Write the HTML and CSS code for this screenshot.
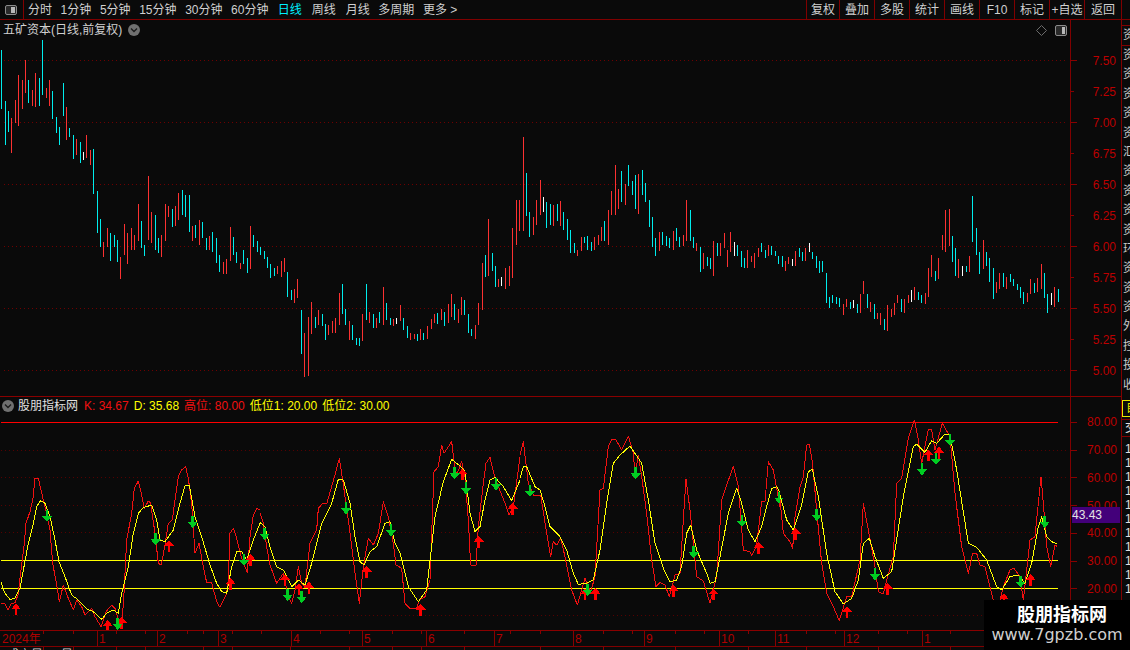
FILE: index.html
```html
<!DOCTYPE html>
<html lang="zh">
<head>
<meta charset="utf-8">
<title>五矿资本</title>
<link rel="stylesheet" href="styles.css">
</head>
<body>
<div class="app">
  <header class="topbar">
    <div class="corner">
      <svg class="pane-icon" viewBox="0 0 12 10"><rect class="pi-box" x="0.5" y="0.5" width="11" height="9" rx="1.5"/><rect class="pi-fill" x="6" y="2" width="4" height="6"/></svg>
    </div>
    <nav class="periods">
      <span>分时</span><span>1分钟</span><span>5分钟</span><span>15分钟</span><span>30分钟</span><span>60分钟</span><span class="active wide">日线</span><span class="wide">周线</span><span>月线</span><span>多周期</span><span>更多 &gt;</span>
    </nav>
    <div class="tools">
      <span class="tool tool-first">复权</span><span class="tool">叠加</span><span class="tool">多股</span><span class="tool">统计</span><span class="tool">画线</span><span class="tool">F10</span><span class="tool">标记</span><span class="tool">+自选</span><span class="tool tool-last">返回</span>
    </div>
  </header>

  <div class="workspace">
    <div class="charts">
      <section class="section price">
        <div class="pane">
          <div class="title-row">
            <span>五矿资本(日线,前复权)</span>
            <svg class="chev" viewBox="0 0 12 12"><circle class="chev-bg" cx="6" cy="6" r="6"/><path class="chev-mark" d="M3 4.5L6 7.5L9 4.5"/></svg>
            <svg class="diamond" viewBox="0 0 11 11"><path class="diamond-mark" d="M5.5 0.5L10.5 5.5L5.5 10.5L0.5 5.5Z"/></svg>
            <svg class="pane-icon pane-icon-lg" viewBox="0 0 12 11"><rect class="pi-box" x="0.5" y="0.5" width="11" height="10" rx="1.5"/><rect class="pi-fill" x="7" y="2" width="3" height="7"/></svg>
          </div>
          <svg class="plot plot-price" viewBox="0 0 3210 1068">
            <path class="grid" d="M12 61.5H3198M12 247.5H3198M12 433.5H3198M12 619.5H3198M12 805.5H3198M12 991.5H3198"/>
            <g transform="scale(1.0233 1)">
              <path class="bar up" d="M33 234V339M45 180V249M54 105V258M65 120V207M74 60V159M95 150V198M104 99V201M136 144V174M145 120V198M194 201V300M224 297V345M253 285V354M265 330V375M303 606V651M315 564V621M353 651V717M364 552V645M373 579V672M385 564V630M394 585V630M405 492V603M435 408V600M444 516V609M473 585V651M485 492V603M493 498V531M514 498V558M523 459V540M564 558V603M584 540V615M614 588V630M655 666V702M663 657V702M675 561V663M704 669V687M734 558V687M813 678V702M824 663V711M833 654V696M863 747V789M873 717V774M892 879V1011M904 831V1008M912 786V882M933 810V855M963 855V885M974 843V879M983 834V879M995 759V855M1024 843V900M1062 822V903M1082 816V849M1103 834V864M1123 741V855M1153 837V858M1173 795V843M1203 879V900M1214 882V897M1232 867V900M1252 858V897M1264 837V867M1273 822V849M1293 807V840M1314 792V849M1323 762V831M1343 807V849M1352 771V825M1393 855V897M1402 789V855M1414 669V810M1431 537V708M1462 717V741M1483 684V747M1493 678V738M1502 564V714M1513 480V615M1522 480V573M1534 291V573M1563 531V585"/>
              <path class="bar down" d="M4 30V207M16 183V315M24 213V276M83 120V189M115 114V198M124 0V165M153 153V237M165 231V279M174 261V315M185 129V228M203 264V291M215 285V357M235 306V369M274 327V462M285 453V579M294 537V621M323 579V663M335 585V621M344 600V666M414 543V624M423 615V648M455 525V630M464 594V639M505 507V561M534 450V525M544 465V531M555 465V576M573 555V594M593 546V594M605 594V630M622 576V636M634 594V669M643 645V696M684 591V645M693 636V669M713 630V672M725 654V699M743 585V621M754 603V636M763 621V645M775 633V657M784 651V684M793 672V714M804 684V708M842 696V771M854 750V780M883 810V942M924 831V864M945 822V858M954 852V900M1003 732V822M1012 807V855M1033 855V900M1044 894V915M1053 894V918M1074 732V840M1094 822V864M1112 816V849M1132 789V840M1144 834V855M1182 834V870M1194 858V894M1223 882V903M1243 879V900M1282 819V852M1302 816V858M1332 792V840M1363 780V825M1373 822V879M1382 867V888M1422 645V711M1443 639V693M1452 678V741M1543 399V528M1551 516V591"/>
              <path class="bar flat" d="M244 336V360M1162 834V852M1471 711V738"/>
            </g>
            <g transform="translate(1605 270) scale(1.0233 1)">
              <path class="bar up" d="M4 210V285M16 150V255M54 225V288M74 213V288M124 360V378M136 321V363M174 321V360M185 315V345M194 291V333M215 240V345M224 183V255M235 105V255M244 177V237M265 162V225M303 132V252M364 306V363M405 303V360M435 315V348M444 210V333M473 339V363M493 369V417M523 333V438M544 339V378M555 309V354M564 360V411M573 306V366M622 360V414M634 378V396M643 369V414M655 354V381M684 345V378M734 393V423M743 381V402M763 363V408M793 354V393M904 522V555M912 507V531M954 492V549M963 453V492M983 516V546M1003 549V567M1012 549V585M1033 525V603M1044 537V561M1053 519V555M1062 495V519M1082 507V549M1094 495V519M1112 471V510M1144 489V522M1153 414V501M1162 375V441M1182 384V447M1194 315V360M1203 240V366M1214 237V348M1243 387V444M1273 378V426M1314 330V417M1352 456V489M1363 429V477M1382 441V477M1443 489V516M1452 447V492M1472 444V486M1484 402V477M1522 471V531"/>
              <path class="bar down" d="M33 216V294M45 222V285M65 222V273M83 246V300M95 267V330M104 300V369M115 339V369M145 321V339M153 318V360M165 336V363M203 273V333M253 123V216M274 105V168M285 153V195M294 135V237M315 120V195M323 159V216M335 210V291M344 261V351M353 324V378M373 306V345M385 318V348M394 324V354M414 294V333M423 321V351M455 240V333M464 321V354M485 351V426M505 381V408M514 384V417M534 339V378M593 345V378M605 363V411M614 384V414M663 339V366M675 360V384M693 348V375M704 363V378M713 378V402M725 378V411M775 354V381M784 366V393M813 366V387M824 378V414M833 393V429M842 393V426M854 429V519M863 501V534M873 495V519M883 501V522M892 504V531M924 516V537M945 522V549M974 492V534M995 522V567M1024 567V600M1074 507V546M1123 486V510M1132 495V519M1173 423V453M1223 318V396M1232 354V438M1264 408V426M1282 198V336M1293 294V375M1302 366V432M1323 366V408M1332 384V456M1343 414V507M1373 429V471M1393 432V456M1402 447V468M1414 462V480M1423 471V504M1431 486V522M1463 459V489M1493 429V504M1502 492V549M1534 477V516"/>
              <path class="bar flat" d="M24 201V246M584 336V378M754 387V408M804 339V366M933 510V534M1103 480V516M1252 408V438M1513 489V525"/>
            </g>
          </svg>
        </div>
        <div class="axis axis-price">
          <div class="mark"><i class="tick"></i><span>7.50</span></div>
          <div class="mark"><i class="tick minor"></i><span>7.25</span></div>
          <div class="mark"><i class="tick"></i><span>7.00</span></div>
          <div class="mark"><i class="tick minor"></i><span>6.75</span></div>
          <div class="mark"><i class="tick"></i><span>6.50</span></div>
          <div class="mark"><i class="tick minor"></i><span>6.25</span></div>
          <div class="mark"><i class="tick"></i><span>6.00</span></div>
          <div class="mark"><i class="tick minor"></i><span>5.75</span></div>
          <div class="mark"><i class="tick"></i><span>5.50</span></div>
          <div class="mark"><i class="tick minor"></i><span>5.25</span></div>
          <div class="mark"><i class="tick"></i><span>5.00</span></div>
        </div>
      </section>

      <section class="section indicator">
        <div class="pane">
          <div class="legend">
            <svg class="chev" viewBox="0 0 12 12"><circle class="chev-bg" cx="6" cy="6" r="6"/><path class="chev-mark" d="M3 4.5L6 7.5L9 4.5"/></svg>
            <span class="legend-name">股朋指标网</span>
            <span class="c-red">K: 34.67</span>
            <span class="c-yellow">D: 35.68</span>
            <span class="c-red">高位: 80.00</span>
            <span class="c-yellow">低位1: 20.00</span>
            <span class="c-yellow">低位2: 30.00</span>
          </div>
          <svg class="plot plot-ind" viewBox="0 0 3210 630">
            <defs>
              <path id="arrow-up" class="arrow-up" d="M0 0L15 18H4V36H-4V18H-15Z"/>
              <path id="arrow-down" class="arrow-down" d="M0 0L15-18H4V-36H-4V-18H-15Z"/>
            </defs>
            <path class="grid grid-dim" d="M3 92H3207M3 172H3207M3 256H3207M3 337H3207M3 587H3207"/>
            <path class="level-red" d="M3 7.5H3174"/>
            <path class="level-yellow" d="M3 421.5H3174M3 505.5H3174"/>

            <g>
              <polyline class="line-k" points="3,550 15,551 24,570 33,552 45,548 54,525 63,450 72,380 78,310 90,275 99,235 105,175 115,175 124,215 135,260 150,330 158,430 172,505 178,545 190,495 205,535 220,570 230,540 245,560 255,585 265,575 275,565 285,590 303,620 318,575 335,555 345,565 355,600 365,625 372,520 380,360 395,280 403,205 415,183 425,225 433,265 445,243 452,250 465,340 475,430 484,435 495,375 505,310 517,300 525,240 535,170 545,150 557,140 565,175 575,250 585,400 597,370 608,430 620,488 635,488 650,545 660,562 680,520 685,480 690,340 700,325 710,355 725,415 742,458 750,350 760,285 770,265 780,270"/>
              <polyline class="line-d" points="3,487 15,520 30,538 45,535 60,505 72,440 85,370 100,310 110,260 122,242 135,250 150,290 165,360 177,425 195,470 215,525 235,540 260,567 280,575 305,598 320,580 340,570 355,580 365,520 385,440 400,340 415,280 430,263 455,255 470,300 480,360 495,365 520,330 540,250 555,197 568,197 585,290 605,350 630,435 650,490 665,515 680,520 695,440 710,395 725,395 740,420 760,360 780,310"/>
              <use href="#arrow-up" transform="translate(48 550)"/><use href="#arrow-up" transform="translate(323 600)"/><use href="#arrow-up" transform="translate(365 590)"/><use href="#arrow-up" transform="translate(507 360)"/><use href="#arrow-up" transform="translate(692 474)"/><use href="#arrow-up" transform="translate(752 402)"/>
              <use href="#arrow-down" transform="translate(141 306)"/><use href="#arrow-down" transform="translate(467 376)"/><use href="#arrow-down" transform="translate(353 630)"/><use href="#arrow-down" transform="translate(578 324)"/><use href="#arrow-down" transform="translate(732 438)"/>
            </g>
            <g transform="translate(780 0)">
              <polyline class="line-k" points="0,278 10,310 20,380 30,435 50,490 70,460 85,530 95,550 105,510 115,440 125,490 135,500 150,370 170,330 175,265 188,250 200,252 225,165 238,115 248,180 265,300 285,460 298,550 310,440 325,355 340,375 355,340 370,245 385,290 400,370 408,435 425,445 435,550 450,565 470,565 478,540 495,530 510,480 522,155 535,140 545,75 552,100 575,65 583,130 590,165 605,125 615,170 625,300 632,435 648,435 655,320 670,190 678,130 690,112 700,155 715,200 735,250 747,285 760,260 780,110"/>
              <polyline class="line-d" points="0,308 15,320 30,380 50,440 70,450 95,500 115,480 135,495 155,430 185,310 215,250 235,178 250,180 270,250 285,350 300,425 312,435 330,395 350,380 375,310 390,305 405,370 420,400 445,500 475,545 500,510 525,290 550,185 575,118 600,138 615,155 630,280 645,335 660,320 675,240 690,180 705,172 730,200 755,242 780,180"/>
              <use href="#arrow-up" transform="translate(75 462)"/><use href="#arrow-up" transform="translate(117 490)"/><use href="#arrow-up" transform="translate(147 485)"/><use href="#arrow-up" transform="translate(320 437)"/><use href="#arrow-up" transform="translate(482 551)"/><use href="#arrow-up" transform="translate(607 145)"/><use href="#arrow-up" transform="translate(656 347)"/><use href="#arrow-up" transform="translate(758 248)"/>
              <use href="#arrow-down" transform="translate(14 360)"/><use href="#arrow-down" transform="translate(83 543)"/><use href="#arrow-down" transform="translate(125 549)"/><use href="#arrow-down" transform="translate(258 283)"/><use href="#arrow-down" transform="translate(393 349)"/><use href="#arrow-down" transform="translate(584 178)"/><use href="#arrow-down" transform="translate(618 223)"/><use href="#arrow-down" transform="translate(708 211)"/>
            </g>
            <g transform="translate(1560 0)">
              <polyline class="line-k" points="0,105 10,65 25,190 40,225 62,225 80,340 92,410 100,365 110,375 122,355 135,410 155,510 172,555 195,475 212,515 225,470 240,210 250,205 265,80 275,58 287,58 305,90 325,48 340,100 345,165 355,105 365,170 380,280 395,420 408,500 420,487 435,495 448,530 465,465 480,460 490,300 498,178 510,270 530,470 550,483 570,550 590,470 605,240 620,195 640,140 655,200 670,390 690,395 695,408 710,375 725,245 735,245 745,125 760,150 780,260"/>
              <polyline class="line-d" points="0,175 10,140 20,140 45,200 60,210 75,260 90,320 120,350 140,390 160,460 175,493 200,490 220,480 240,390 260,250 280,130 300,105 330,78 345,100 365,130 385,240 405,370 430,445 450,485 470,480 485,440 500,340 512,315 530,390 560,460 570,490 585,485 600,410 625,280 650,205 665,250 685,330 705,365 725,320 740,260 755,205 770,200 780,220"/>
              <use href="#arrow-up" transform="translate(195 505)"/><use href="#arrow-up" transform="translate(226 503)"/><use href="#arrow-up" transform="translate(461 495)"/><use href="#arrow-up" transform="translate(580 505)"/><use href="#arrow-up" transform="translate(716 365)"/>
              <use href="#arrow-down" transform="translate(30 231)"/><use href="#arrow-down" transform="translate(203 528)"/><use href="#arrow-down" transform="translate(347 178)"/><use href="#arrow-down" transform="translate(521 415)"/><use href="#arrow-down" transform="translate(666 321)"/><use href="#arrow-down" transform="translate(777 251)"/>
            </g>
            <g transform="translate(2340 0)">
              <polyline class="line-k" points="0,240 10,340 30,365 38,385 45,290 60,200 70,170 80,75 88,73 97,125 110,270 125,430 140,520 160,560 178,602 200,530 215,530 240,420 250,250 265,330 285,440 295,515 310,522 320,480 340,410 350,190 365,175 385,55 403,0 415,60 425,130 445,28 455,30 465,90 487,10 510,50 525,220 545,380 565,460 578,400 590,400 600,435 615,440 635,520 640,540 660,540 672,495 690,450 702,445 720,470 730,540 750,360 765,350 783,170 790,250 800,380 812,440 825,375 832,380"/>
              <polyline class="line-d" points="0,225 20,300 40,330 65,255 85,155 97,148 115,230 140,400 165,515 190,552 215,535 235,480 250,370 268,355 285,410 310,475 335,455 370,230 400,80 410,72 435,97 455,62 470,70 495,42 510,45 530,150 565,370 590,382 620,420 650,500 665,510 690,470 715,465 735,490 755,430 775,320 785,290 800,350 815,365 832,372"/>
              <use href="#arrow-up" transform="translate(47 323)"/><use href="#arrow-up" transform="translate(201 558)"/><use href="#arrow-up" transform="translate(323 488)"/><use href="#arrow-up" transform="translate(445 88)"/><use href="#arrow-up" transform="translate(477 80)"/><use href="#arrow-up" transform="translate(672 520)"/><use href="#arrow-up" transform="translate(752 462)"/>
              <use href="#arrow-down" transform="translate(110 303)"/><use href="#arrow-down" transform="translate(285 481)"/><use href="#arrow-down" transform="translate(426 166)"/><use href="#arrow-down" transform="translate(468 135)"/><use href="#arrow-down" transform="translate(510 78)"/><use href="#arrow-down" transform="translate(722 503)"/><use href="#arrow-down" transform="translate(794 324)"/>
            </g>
          </svg>
        </div>
        <div class="axis axis-ind">
          <div class="mark"><i class="tick"></i><span>80.00</span></div>
          <div class="mark"><i class="tick"></i><span>70.00</span></div>
          <div class="mark"><i class="tick"></i><span>60.00</span></div>
          <div class="mark"><i class="tick"></i><span>50.00</span></div>
          <div class="mark"><i class="tick"></i><span>40.00</span></div>
          <div class="mark"><i class="tick"></i><span>30.00</span></div>
          <div class="mark"><i class="tick"></i><span>20.00</span></div>
          <div class="last-value">43.43</div>
        </div>
      </section>

      <svg class="timeline" viewBox="0 0 1121 15">
        <path class="time-minor" d="M43 0V3M73 0V3M116 0V3M145 0V3M187 0V3M203 0V3M232 0V3M261 0V3M320 0V3M349 0V3M392 0V3M421 0V3M464 0V3M510 0V3M540 0V3M603 0V3M632 0V3M675 0V3M704 0V3M748 0V3M806 0V3M835 0V3M878 0V3M907 0V3M950 0V3M1010 0V3M1040 0V3"/>
        <path class="time-major" d="M97 0V15M157 0V15M218 0V15M291 0V15M362 0V15M426 0V15M494 0V15M573 0V15M644 0V15M719 0V15M775 0V15M844 0V15M922 0V15M1070.5 0V15"/>
        <text class="time-label" x="2" y="12">2024年</text>
        <text class="time-label" x="99" y="12">1</text>
        <text class="time-label" x="159" y="12">2</text>
        <text class="time-label" x="220" y="12">3</text>
        <text class="time-label" x="293" y="12">4</text>
        <text class="time-label" x="364" y="12">5</text>
        <text class="time-label" x="428" y="12">6</text>
        <text class="time-label" x="496" y="12">7</text>
        <text class="time-label" x="575" y="12">8</text>
        <text class="time-label" x="646" y="12">9</text>
        <text class="time-label" x="721" y="12">10</text>
        <text class="time-label" x="777" y="12">11</text>
        <text class="time-label" x="846" y="12">12</text>
        <text class="time-label" x="924" y="12">1</text>
      </svg>
      <div class="statusline">
        <span>成交量</span><span>量</span>
        <svg class="status-ticks" viewBox="0 0 1121 3"><path class="time-major" d="M43.5 0V3M73.5 0V3M116.5 0V3M145.5 0V3M203.5 0V3M232.5 0V3M290.5 0V3M349.5 0V3M392.5 0V3M421.5 0V3M464.5 0V3M540.5 0V3M603.5 0V3M675.5 0V3M748.5 0V3M806.5 0V3M878.5 0V3M950.5 0V3"/></svg>
      </div>
    </div>

    <aside class="side">
      <div class="side-top">
        <div class="side-row side-boxed">资</div>
        <div class="side-row">资</div>
        <div class="side-row">资</div>
        <div class="side-row">资</div>
        <div class="side-row">资</div>
        <div class="side-row">资</div>
        <div class="side-row">汇</div>
        <div class="side-row">资</div>
        <div class="side-row">资</div>
        <div class="side-row">资</div>
        <div class="side-row">资</div>
        <div class="side-row">环</div>
        <div class="side-row">资</div>
        <div class="side-row">资</div>
        <div class="side-row">资</div>
        <div class="side-row">外</div>
        <div class="side-row">控</div>
        <div class="side-row">投</div>
        <div class="side-row">收</div>
      </div>
      <div class="side-bottom">
        <div class="side-self">自</div>
        <div class="side-head">交</div>
        <div class="side-num">1</div><div class="side-num">1</div><div class="side-num">1</div><div class="side-num">1</div><div class="side-num">1</div><div class="side-num">1</div><div class="side-num">1</div><div class="side-num">1</div><div class="side-num">1</div><div class="side-num">1</div><div class="side-num">1</div>
      </div>
    </aside>
  </div>

  <div class="watermark">
    <div class="wm-title">股朋指标网</div>
    <div class="wm-url">www.7gpzb.com</div>
  </div>
</div>
</body>
</html>
```

FILE: styles.css
```css
* { box-sizing: border-box; }
html, body { margin: 0; height: 100%; background: #0a0a0a; }
body {
  font-family: "Liberation Sans", "Noto Sans CJK SC", sans-serif;
  font-size: 12px;
  line-height: 14px;
  color: #d0d0d0;
  overflow: hidden;
}
.app { position: relative; width: 1130px; height: 650px; overflow: hidden; }

/* top bar */
.topbar {
  display: flex;
  align-items: stretch;
  height: 20px;
  border-bottom: 1px solid #800000;
}
.corner {
  width: 24px;
  border-right: 1px solid #800000;
  display: flex;
  align-items: center;
  padding-left: 5px;
}
.pane-icon { width: 12px; height: 10px; display: block; }
.pi-box { fill: #2a2a2a; stroke: #8c8c8c; stroke-width: 1; }
.pi-fill { fill: #b8b8b8; }
.periods {
  display: flex;
  align-items: center;
  gap: 8.6px;
  padding-left: 4px;
  white-space: nowrap;
}
.periods .active { color: #00f0ff; margin-left: 0.7px; }
.periods .wide { margin-right: 1.4px; }
.tools { display: flex; margin-left: auto; margin-right: 8px; }
.tool {
  width: 35px;
  border-left: 1px solid #800000;
  display: flex;
  align-items: center;
  justify-content: center;
  white-space: nowrap;
}
.tool-first { width: 33px; }
.tool-last { width: 38px; border-right: 1px solid #800000; }

/* body */
.workspace { display: flex; height: 630px; }
.charts { width: 1122px; border-right: 1px solid #800000; }
.section { display: flex; border-bottom: 1px solid #8a0000; }
.price { height: 377px; }
.indicator { height: 234px; }
.pane { width: 1070px; }
.title-row {
  display: flex;
  align-items: center;
  height: 20px;
  padding-left: 3px;
  white-space: nowrap;
}
.chev { width: 12px; height: 12px; flex: none; display: block; }
.chev-bg { fill: #707070; }
.chev-mark { fill: none; stroke: #1c1c1c; stroke-width: 1.4; }
.title-row .chev { margin-left: 6px; }
.diamond { width: 11px; height: 11px; margin-left: auto; }
.diamond-mark { fill: none; stroke: #6c6c6c; stroke-width: 1; }
.pane-icon-lg { height: 11px; margin: 0 3px 0 8px; }

.plot { display: block; width: 1070px; }
.plot-price { height: 356px; }
.plot-ind { height: 210px; }
.grid { fill: none; stroke: #6e0000; stroke-width: 3; stroke-dasharray: 2.5 9.5; shape-rendering: crispEdges; }
.grid-dim { stroke: #560000; }
.bar { fill: none; stroke-width: 2.93; shape-rendering: crispEdges; }
.bar.up { stroke: #ff3232; }
.bar.down { stroke: #00f0f0; }
.bar.flat { stroke: #ffffff; }
.level-red { fill: none; stroke: #ff0000; stroke-width: 3; shape-rendering: crispEdges; }
.level-yellow { fill: none; stroke: #ffff00; stroke-width: 3; shape-rendering: crispEdges; }
.line-k { fill: none; stroke: #f01010; stroke-width: 3; stroke-linejoin: round; shape-rendering: crispEdges; }
.line-d { fill: none; stroke: #ffff00; stroke-width: 3; stroke-linejoin: round; shape-rendering: crispEdges; }
.arrow-up { fill: #ff0000; shape-rendering: crispEdges; }
.arrow-down { fill: #00cc22; shape-rendering: crispEdges; }

/* axes */
.axis {
  position: relative;
  width: 51px;
  border-left: 1px solid #800000;
  color: #bb0000;
}
.mark { display: flex; align-items: center; justify-content: space-between; padding-right: 5px; }
.axis-price { padding-top: 25px; }
.axis-price .mark { height: 31px; }
.axis-ind { padding-top: 11.6px; }
.axis-ind .mark { height: 27.72px; padding-right: 4px; }
.tick { display: block; width: 6px; height: 1px; background: #8a0000; }
.tick.minor { width: 3px; }
.last-value {
  position: absolute;
  top: 110px;
  left: 1px;
  width: 48px;
  height: 16px;
  background: #43007a;
  color: #e4e4e4;
  line-height: 16px;
}

/* legend */
.legend {
  display: flex;
  align-items: center;
  height: 23px;
  padding: 0 0 6px 2px;
  white-space: nowrap;
}
.legend-name { margin: 0 6px 0 4px; color: #e0e0e0; }
.legend span + span { margin-left: 5px; }
.legend .legend-name + span { margin-left: 0; }
.c-red { color: #f01010; }
.c-yellow { color: #ffff00; }

/* time axis */
.timeline { display: block; width: 1121px; height: 15px; }
.time-major { fill: none; stroke: #8a0000; stroke-width: 1; shape-rendering: crispEdges; }
.time-minor { fill: none; stroke: #8a0000; stroke-width: 1; shape-rendering: crispEdges; }
.time-label { fill: #b00000; font-size: 12px; font-family: "Liberation Sans", "Noto Sans CJK SC", sans-serif; }
.statusline {
  position: relative;
  display: flex;
  gap: 18px;
  height: 4px;
  padding: 2px 0 0 7px;
  border-top: 1px solid #800000;
  overflow: hidden;
  line-height: 12px;
}
.status-ticks { position: absolute; left: 0; top: 0; width: 1121px; height: 3px; }

/* clipped side list */
.side { width: 8px; overflow: hidden; color: #c8c8c8; flex: none; }
.side-top { height: 377px; padding-top: 5px; overflow: hidden; }
.side-row { height: 19.4px; padding-left: 1px; line-height: 19px; white-space: nowrap; }
.side-boxed { border-top: 1px solid #800000; border-bottom: 1px solid #800000; height: 21px; }
.side-bottom { padding-top: 3px; }
.side-self {
  height: 17px;
  padding-left: 3px;
  color: #e8e800;
  border: 1px solid #e8e800;
  border-right: 0;
  line-height: 15px;
  white-space: nowrap;
}
.side-head {
  height: 18px;
  margin-top: 2px;
  padding-left: 3px;
  border-top: 1px solid #800000;
  border-bottom: 1px solid #800000;
  line-height: 16px;
  color: #e0e0e0;
  white-space: nowrap;
}
.side-num { height: 14px; padding-left: 3px; margin-top: 0; line-height: 14px; color: #e0e0e0; }
.side-head + .side-num { margin-top: 5px; }

/* watermark overlay */
.watermark {
  position: absolute;
  right: 0;
  bottom: 0;
  width: 146px;
  height: 50px;
  background: #000;
  display: flex;
  flex-direction: column;
  align-items: center;
}
.wm-title {
  font-family: "Noto Sans CJK SC", sans-serif;
  font-size: 18px;
  font-weight: 700;
  line-height: 24px;
  margin: 1px 0 0 10px;
  color: #fff;
}
.wm-url {
  font-family: "DejaVu Sans", sans-serif;
  font-size: 16px;
  line-height: 20px;
  color: #d0d0d0;
}
```
